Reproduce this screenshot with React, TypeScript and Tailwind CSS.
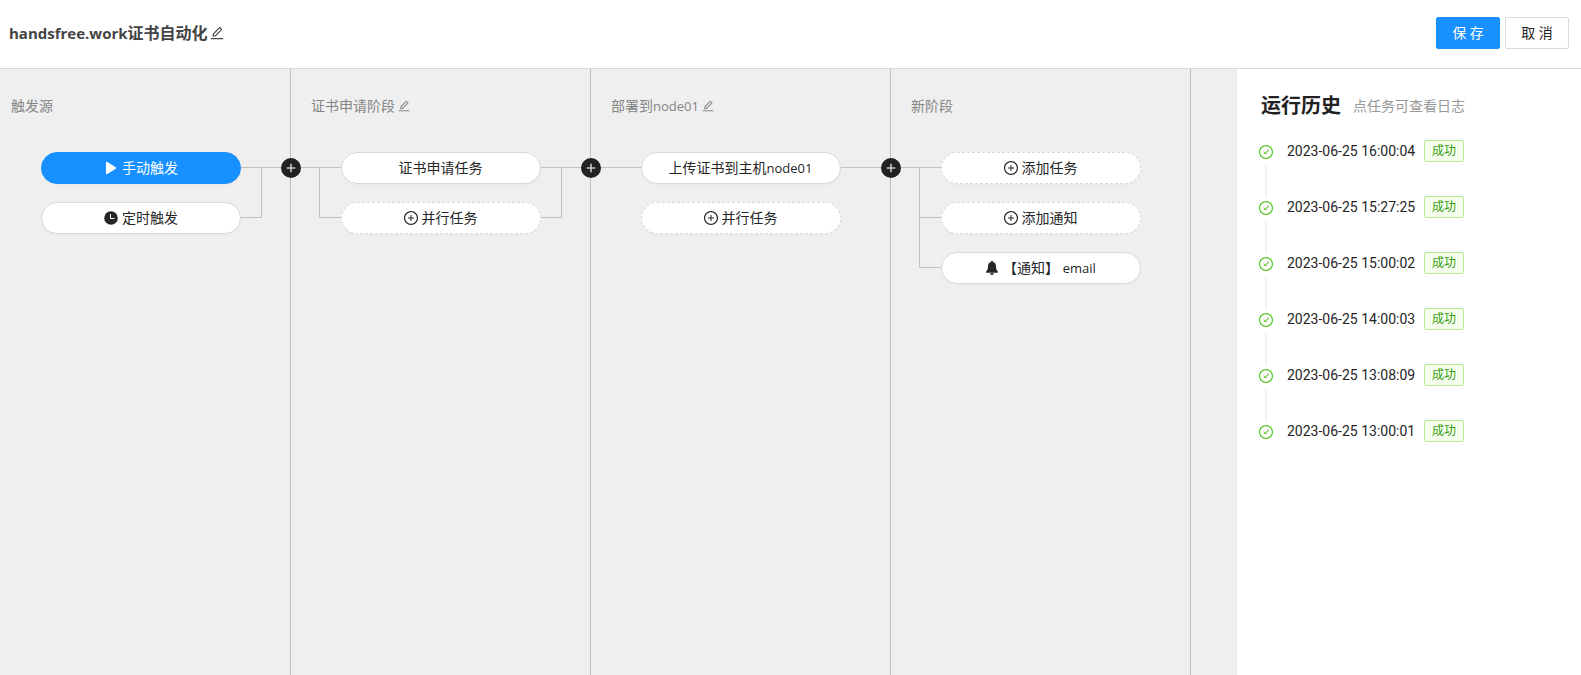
import React from "react";
import { AiOutlineCheckCircle, AiOutlineEdit, AiOutlinePlusCircle } from "react-icons/ai";

type Task = {
  key: string;
  label: React.ReactNode;
  icon?: React.ReactNode;
  variant?: "primary" | "solid" | "dashed";
};

type Stage = {
  key: string;
  title: React.ReactNode;
  editable?: boolean;
  tasks: Task[];
  enter: "none" | "first" | "all";
  leave: "none" | "first" | "all";
};

/* Crops the empty margin round the glyphs of the Ant Design icon set. */
const tight = "64 64 896 896";

function Latin({ children }: { children: React.ReactNode }) {
  return <span className="text-[13px]">{children}</span>;
}

function PlayIcon() {
  return (
    <svg viewBox="0 0 14 14" className="size-3.5" fill="currentColor" aria-hidden="true">
      <path d="M2 1.7C2 1 2.7 .6 3.3 .9L11.7 6.2C12.3 6.6 12.3 7.4 11.7 7.8L3.3 13.1C2.7 13.4 2 13 2 12.3Z" />
    </svg>
  );
}

function ClockIcon() {
  return (
    <svg viewBox="0 0 14 14" className="size-3.5" aria-hidden="true">
      <circle cx="7" cy="7" r="6.8" fill="currentColor" />
      <path d="M6.5 3v4.5h4" fill="none" stroke="#ffffff" strokeWidth="1" />
    </svg>
  );
}

function BellIcon() {
  return (
    <svg viewBox="0 0 14 14" className="size-3.5" fill="currentColor" aria-hidden="true">
      <path d="M7 0C7.6 0 8 .4 8 1C10 1.5 11 3.1 11 5.2C11 8 11.8 9.3 12.7 10.2C13.3 10.9 13 11.8 12.2 11.8H1.8C1 11.8 .7 10.9 1.3 10.2C2.2 9.3 3 8 3 5.2C3 3.1 4 1.5 6 1C6 .4 6.4 0 7 0Z" />
      <path d="M5 12.3H9C9 13.3 8.1 14 7 14S5 13.3 5 12.3Z" />
    </svg>
  );
}

function AddStageIcon() {
  return (
    <svg viewBox="0 0 20 20" className="size-5" aria-hidden="true">
      <circle cx="10" cy="10" r="10" fill="#222222" />
      <path d="M10 5.7v8.6M5.7 10h8.6" stroke="#c8c8c8" strokeWidth="1.6" />
    </svg>
  );
}

const plus = <AiOutlinePlusCircle size={14} viewBox={tight} />;

const stages: Stage[] = [
  {
    key: "trigger",
    title: "触发源",
    enter: "none",
    leave: "all",
    tasks: [
      { key: "manual", label: "手动触发", icon: <PlayIcon />, variant: "primary" },
      { key: "timer", label: "定时触发", icon: <ClockIcon /> },
    ],
  },
  {
    key: "apply",
    title: "证书申请阶段",
    editable: true,
    enter: "all",
    leave: "all",
    tasks: [
      { key: "cert", label: "证书申请任务" },
      { key: "parallel", label: "并行任务", icon: plus, variant: "dashed" },
    ],
  },
  {
    key: "deploy",
    title: (
      <>
        部署到<Latin>node01</Latin>
      </>
    ),
    editable: true,
    enter: "first",
    leave: "first",
    tasks: [
      {
        key: "upload",
        label: (
          <>
            上传证书到主机<Latin>node01</Latin>
          </>
        ),
      },
      { key: "parallel", label: "并行任务", icon: plus, variant: "dashed" },
    ],
  },
  {
    key: "new",
    title: "新阶段",
    enter: "all",
    leave: "none",
    tasks: [
      { key: "task", label: "添加任务", icon: plus, variant: "dashed" },
      { key: "notify", label: "添加通知", icon: plus, variant: "dashed" },
      {
        key: "email",
        label: (
          <>
            【通知】 <Latin>email</Latin>
          </>
        ),
        icon: <BellIcon />,
      },
    ],
  },
];

const history = [
  "2023-06-25 16:00:04",
  "2023-06-25 15:27:25",
  "2023-06-25 15:00:02",
  "2023-06-25 14:00:03",
  "2023-06-25 13:08:09",
  "2023-06-25 13:00:01",
];

const pillStyles = {
  primary: "border-[#1890ff] bg-[#1890ff] text-white",
  solid: "border-[#d9d9d9] bg-white text-[#262626]",
  dashed: "border-dashed border-[#d9d9d9] bg-white text-[#262626]",
};

/* One side of a task row: the upper half carries the horizontal line, the rail runs down to the next row. */
function Connector({
  side,
  mode,
  index,
  last,
}: {
  side: "left" | "right";
  mode: Stage["enter"];
  index: number;
  last: boolean;
}) {
  const left = side === "left";
  const first = index === 0;
  const linked = mode === "all" || (mode === "first" && first);
  const rail = left ? "border-l" : "border-r";
  const railWidth = left ? "w-[22px]" : "w-[21px]";
  const align = left ? "justify-end" : "justify-start";
  return (
    <div className="flex flex-1 flex-col">
      <div className={`flex h-[25px] border-[#c2c2c2] ${align} ${linked && first ? "border-b" : ""}`}>
        {linked && !first && <div className={`${railWidth} ${rail} border-b border-[#c2c2c2]`} />}
      </div>
      <div className={`flex h-[25px] ${align}`}>
        {mode === "all" && !last && <div className={`${railWidth} ${rail} border-[#c2c2c2]`} />}
      </div>
    </div>
  );
}

function StageColumn({ stage, first }: { stage: Stage; first: boolean }) {
  return (
    <section
      className={`relative shrink-0 border-r border-[#c2c2c2] ${first ? "w-[291px]" : "w-[300px]"}`}
    >
      <h2
        className={`flex h-[74px] items-center gap-[3px] text-sm text-[#858585] ${first ? "pl-[11px]" : "pl-5"}`}
      >
        <span>{stage.title}</span>
        {stage.editable && (
          <button type="button" aria-label="编辑阶段名称">
            <AiOutlineEdit size={12} viewBox={tight} />
          </button>
        )}
      </h2>
      <ul>
        {stage.tasks.map((task, i) => (
          <li key={task.key} className="flex h-[50px] items-center">
            {first ? (
              <div className="w-[41px]" />
            ) : (
              <Connector side="left" mode={stage.enter} index={i} last={i === stage.tasks.length - 1} />
            )}
            <button
              type="button"
              className={`flex h-8 w-[200px] shrink-0 items-center justify-center gap-1 rounded-full border text-sm shadow-[0_2px_0_rgba(0,0,0,0.016)] ${pillStyles[task.variant ?? "solid"]}`}
            >
              {task.icon}
              <span className="whitespace-pre">{task.label}</span>
            </button>
            <Connector side="right" mode={stage.leave} index={i} last={i === stage.tasks.length - 1} />
          </li>
        ))}
      </ul>
      {stage.leave !== "none" && (
        <button
          type="button"
          aria-label="添加阶段"
          className="absolute top-[89px] -right-[11px] z-10"
        >
          <AddStageIcon />
        </button>
      )}
    </section>
  );
}

export default function App() {
  return (
    <div className="flex min-h-screen flex-col bg-white font-['Open_Sans','Noto_Sans_CJK_SC',sans-serif] text-sm text-[#262626]">
      <header className="flex items-center justify-between border-b border-[#d9d9d9] pt-[17px] pr-3 pb-[19px] pl-[9px]">
        <h1 className="flex items-center gap-0.5 text-base font-bold text-[#444444]">
          <span>
            <span className="text-[15px]">handsfree.work</span>证书自动化
          </span>
          <button type="button" aria-label="编辑名称">
            <AiOutlineEdit size={14} viewBox={tight} />
          </button>
        </h1>
        <div className="flex gap-[5px]">
          <button
            type="button"
            className="h-8 w-16 rounded-xs border border-[#1890ff] bg-[#1890ff] text-white"
          >
            保 存
          </button>
          <button type="button" className="h-8 w-16 rounded-xs border border-[#d9d9d9] bg-white">
            取 消
          </button>
        </div>
      </header>

      <div className="flex flex-1">
        <main className="flex min-w-0 flex-1 overflow-x-auto bg-[#efefef]">
          {stages.map((stage, i) => (
            <StageColumn key={stage.key} stage={stage} first={i === 0} />
          ))}
        </main>

        <aside className="w-[344px] shrink-0 px-6 pt-[21px]">
          <div className="flex items-center gap-3">
            <h2 className="text-xl leading-8 font-bold text-[#222222]">运行历史</h2>
            <span className="text-sm text-[#999999]">点任务可查看日志</span>
          </div>
          <ol className="-ml-0.5 pt-[18px]">
            {history.map((time, i) => (
              <li key={time} className="flex h-14 gap-3.5">
                <div className="flex w-3.5 flex-col items-center gap-1.5 pt-[5px] text-[#52c41a]">
                  <AiOutlineCheckCircle size={14} viewBox={tight} className="shrink-0" />
                  {i < history.length - 1 && <div className="h-8 w-0.5 shrink-0 bg-[#f0f0f0]" />}
                </div>
                <a href="#log" className="flex h-[22px] items-center gap-2.5">
                  <time className="w-[127px] font-['Roboto',sans-serif] text-sm whitespace-nowrap">{time}</time>
                  <span className="flex h-[22px] items-center rounded-xs border border-[#b7eb8f] bg-[#f6ffed] px-[7px] text-xs text-[#389e0d]">
                    成功
                  </span>
                </a>
              </li>
            ))}
          </ol>
        </aside>
      </div>
    </div>
  );
}
